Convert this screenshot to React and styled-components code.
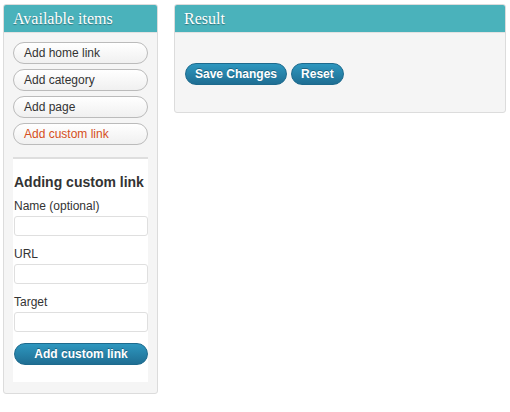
import styled, { createGlobalStyle } from "styled-components";

const GlobalStyle = createGlobalStyle`
  body {
    margin: 0;
    background: #ffffff;
    font-family: "Liberation Sans", Arial, sans-serif;
    color: #333;
  }
`;

const Page = styled.div`
  display: flex;
  align-items: flex-start;
  gap: 16px;
  padding: 4px 4px 0 3px;
`;

const Box = styled.div`
  width: ${(p) => p.width};
  flex: ${(p) => (p.grow ? 1 : "none")};
  background: #f5f5f5;
  border: 1px solid #dcdcdc;
  border-radius: 3px;
  box-sizing: border-box;
  overflow: hidden;
`;

const Header = styled.div`
  height: 27px;
  padding: 0 9px;
  display: flex;
  align-items: center;
  background: #4ab2bb;
  color: #fff;
  font-family: "Liberation Serif", Georgia, serif;
  font-size: 16px;
  text-shadow: 0 1px 1px rgba(0, 0, 0, 0.35);
  border-bottom: 1px solid #e2e2e2;
`;

const Body = styled.div`
  padding: 9px 9px 11px 9px;
`;

const ItemList = styled.div`
  display: flex;
  flex-direction: column;
  gap: 5px;
  padding-bottom: 12px;
  border-bottom: 2px solid #dedede;
`;

const ItemButton = styled.button`
  height: 22px;
  width: 100%;
  padding: 0 10px;
  text-align: left;
  font-family: "Liberation Sans", Arial, sans-serif;
  font-size: 12px;
  color: ${(p) => (p.active ? "#d54e21" : "#333")};
  background: linear-gradient(#ffffff, #f0f0f0);
  border: 1px solid #bbb;
  border-radius: 11px;
  box-sizing: border-box;
  cursor: pointer;
`;

const Form = styled.div`
  background: #fff;
  padding: 15px 0 17px 1px;
  display: flex;
  flex-direction: column;
`;

const FormTitle = styled.h3`
  margin: 0 0 8px;
  font-size: 14px;
  line-height: 17px;
  font-weight: bold;
  white-space: nowrap;
  color: #333;
`;

const Label = styled.label`
  font-size: 12px;
  line-height: 14px;
  color: #333;
  margin-bottom: 3px;
`;

const Input = styled.input`
  height: 20px;
  width: 100%;
  box-sizing: border-box;
  border: 1px solid #dfdfdf;
  border-radius: 3px;
  background: #fff;
  margin: 0 0 11px;
`;

const PrimaryButton = styled.button`
  height: 22px;
  width: ${(p) => (p.block ? "100%" : "auto")};
  padding: 0 9px;
  font-family: "Liberation Sans", Arial, sans-serif;
  font-size: 12px;
  font-weight: bold;
  color: #fff;
  text-shadow: 0 -1px 0 rgba(0, 0, 0, 0.3);
  background: linear-gradient(#2e97bf, #1f6e93);
  border: 1px solid #1d6a8d;
  border-radius: 11px;
  box-sizing: border-box;
  cursor: pointer;
`;

const Actions = styled.div`
  display: flex;
  gap: 4px;
  padding: 30px 10px 27px;
`;

export default function App() {
  return (
    <>
      <GlobalStyle />
      <Page>
        <Box width="155px">
          <Header>Available items</Header>
          <Body>
            <ItemList>
              <ItemButton>Add home link</ItemButton>
              <ItemButton>Add category</ItemButton>
              <ItemButton>Add page</ItemButton>
              <ItemButton active>Add custom link</ItemButton>
            </ItemList>
            <Form>
              <FormTitle>Adding custom link</FormTitle>
              <Label>Name (optional)</Label>
              <Input type="text" />
              <Label>URL</Label>
              <Input type="text" />
              <Label>Target</Label>
              <Input type="text" />
              <PrimaryButton block>Add custom link</PrimaryButton>
            </Form>
          </Body>
        </Box>
        <Box grow>
          <Header>Result</Header>
          <Actions>
            <PrimaryButton>Save Changes</PrimaryButton>
            <PrimaryButton>Reset</PrimaryButton>
          </Actions>
        </Box>
      </Page>
    </>
  );
}
